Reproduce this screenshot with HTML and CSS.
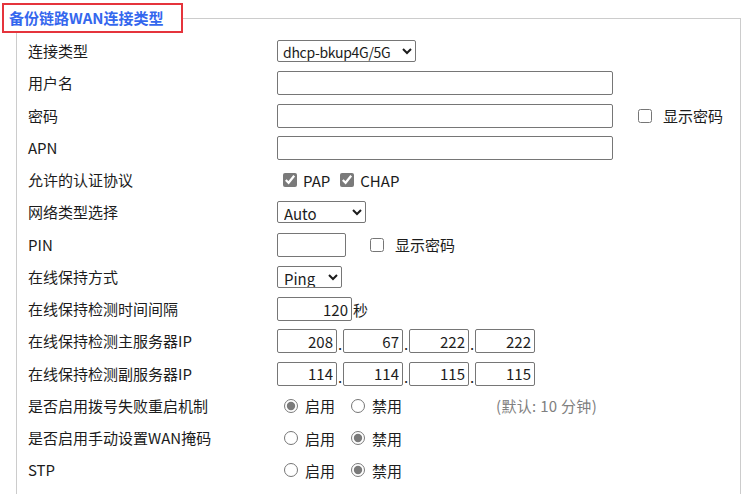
FILE: index.html
```html
<!DOCTYPE html>
<html lang="zh-CN">
<head>
<meta charset="utf-8">
<title>备份链路WAN连接类型</title>
<link rel="stylesheet" href="styles.css">
</head>
<body>
<fieldset class="panel">
  <legend class="title">备份链路WAN连接类型</legend>
  <div class="form">
    <div class="lbl">连接类型</div>
    <div class="ctl">
      <select class="sel sel-type"><option>dhcp-bkup4G/5G</option></select>
    </div>

    <div class="lbl">用户名</div>
    <div class="ctl"><input class="txt wide" type="text"></div>

    <div class="lbl">密码</div>
    <div class="ctl">
      <input class="txt wide" type="password">
      <label class="opt show-pwd"><input class="chk" type="checkbox">显示密码</label>
    </div>

    <div class="lbl">APN</div>
    <div class="ctl"><input class="txt wide" type="text"></div>

    <div class="lbl">允许的认证协议</div>
    <div class="ctl">
      <label class="opt auth"><input class="chk" type="checkbox" checked>PAP</label>
      <label class="opt auth auth2"><input class="chk" type="checkbox" checked>CHAP</label>
    </div>

    <div class="lbl">网络类型选择</div>
    <div class="ctl">
      <select class="sel sel-net"><option>Auto</option></select>
    </div>

    <div class="lbl">PIN</div>
    <div class="ctl">
      <input class="txt pin" type="text">
      <label class="opt show-pin"><input class="chk" type="checkbox">显示密码</label>
    </div>

    <div class="lbl">在线保持方式</div>
    <div class="ctl">
      <select class="sel sel-keep"><option>Ping</option></select>
    </div>

    <div class="lbl">在线保持检测时间间隔</div>
    <div class="ctl">
      <input class="txt num interval" type="text" value="120"><span class="unit">秒</span>
    </div>

    <div class="lbl">在线保持检测主服务器IP</div>
    <div class="ctl">
      <input class="txt num ip" type="text" value="208"><span class="dot">.</span><input class="txt num ip" type="text" value="67"><span class="dot">.</span><input class="txt num ip" type="text" value="222"><span class="dot">.</span><input class="txt num ip" type="text" value="222">
    </div>

    <div class="lbl">在线保持检测副服务器IP</div>
    <div class="ctl">
      <input class="txt num ip" type="text" value="114"><span class="dot">.</span><input class="txt num ip" type="text" value="114"><span class="dot">.</span><input class="txt num ip" type="text" value="115"><span class="dot">.</span><input class="txt num ip" type="text" value="115">
    </div>

    <div class="lbl">是否启用拨号失败重启机制</div>
    <div class="ctl">
      <label class="opt rad"><input class="radio" type="radio" name="redial" checked>启用</label>
      <label class="opt rad rad2"><input class="radio" type="radio" name="redial">禁用</label>
      <span class="hint">(默认: 10 分钟)</span>
    </div>

    <div class="lbl">是否启用手动设置WAN掩码</div>
    <div class="ctl">
      <label class="opt rad"><input class="radio" type="radio" name="mask">启用</label>
      <label class="opt rad rad2"><input class="radio" type="radio" name="mask" checked>禁用</label>
    </div>

    <div class="lbl">STP</div>
    <div class="ctl">
      <label class="opt rad"><input class="radio" type="radio" name="stp">启用</label>
      <label class="opt rad rad2"><input class="radio" type="radio" name="stp" checked>禁用</label>
    </div>
  </div>
</fieldset>
</body>
</html>
```

FILE: styles.css
```css
* {
  box-sizing: border-box;
}

html, body {
  margin: 0;
  padding: 0;
  background: #ffffff;
}

body {
  font-family: "Noto Sans CJK SC", sans-serif;
  font-size: 15px;
  color: #1c1c1c;
  overflow: hidden;
  height: 494px;
}

.panel {
  margin: 3px 7px 0 16px;
  border: 1px solid #cccccc;
  border-bottom: none;
  padding: 2px 0 8px 11px;
  min-width: 0;
}

.title {
  margin-left: -26px;
  padding: 0 17px 0 5px;
  border: 2px solid #e5343c;
  color: #3467ee;
  font-weight: bold;
  font-size: 15px;
  line-height: 26px;
}

.form {
  display: grid;
  grid-template-columns: 249px 1fr;
  grid-auto-rows: 32.25px;
  align-items: center;
}

.lbl {
  line-height: 20px;
  white-space: nowrap;
}

.ctl {
  display: flex;
  align-items: center;
  white-space: nowrap;
}

.txt {
  height: 24px;
  margin: 0;
  border: 1px solid #767676;
  border-radius: 2px;
  padding: 0 3px;
  font-family: inherit;
  font-size: 15px;
  color: #1c1c1c;
  background: #fff;
}

.wide {
  width: 336px;
}

.pin {
  width: 69px;
}

.num {
  text-align: right;
  padding-right: 3px;
}

.interval {
  width: 75px;
}

.unit {
  margin-left: 1px;
}

.ip {
  width: 60px;
}

.dot {
  width: 6px;
  text-align: left;
  padding-left: 1px;
  align-self: flex-end;
  line-height: 20px;
  margin-bottom: -1px;
}

.sel {
  height: 22px;
  margin: 0;
  border: 1px solid #767676;
  border-radius: 2px;
  font-family: inherit;
  font-size: 15px;
  color: #1c1c1c;
  background: #fff;
  padding: 0 2px;
}

.sel-type {
  width: 139px;
  font-size: 14px;
  letter-spacing: -0.3px;
  padding: 0 0 0 1px;
}

.sel-net {
  width: 89px;
}

.sel-keep {
  width: 65px;
}

.opt {
  display: inline-flex;
  align-items: center;
}

.chk {
  width: 14px;
  height: 14px;
  margin: 0 6px 0 0;
  accent-color: #7a7a7a;
}

.show-pwd {
  margin-left: 25px;
}

.show-pwd .chk,
.show-pin .chk {
  margin-right: 11px;
}

.show-pin {
  margin-left: 24px;
}

.auth {
  margin-left: 6px;
}

.auth2 {
  margin-left: 10px;
}

.radio {
  width: 14px;
  height: 14px;
  margin: 0 7px 0 0;
  accent-color: #7a7a7a;
}

.rad {
  margin-left: 7px;
}

.rad2 {
  margin-left: 16px;
}

.hint {
  margin-left: 94px;
  color: #808080;
  letter-spacing: 0.3px;
}
```
